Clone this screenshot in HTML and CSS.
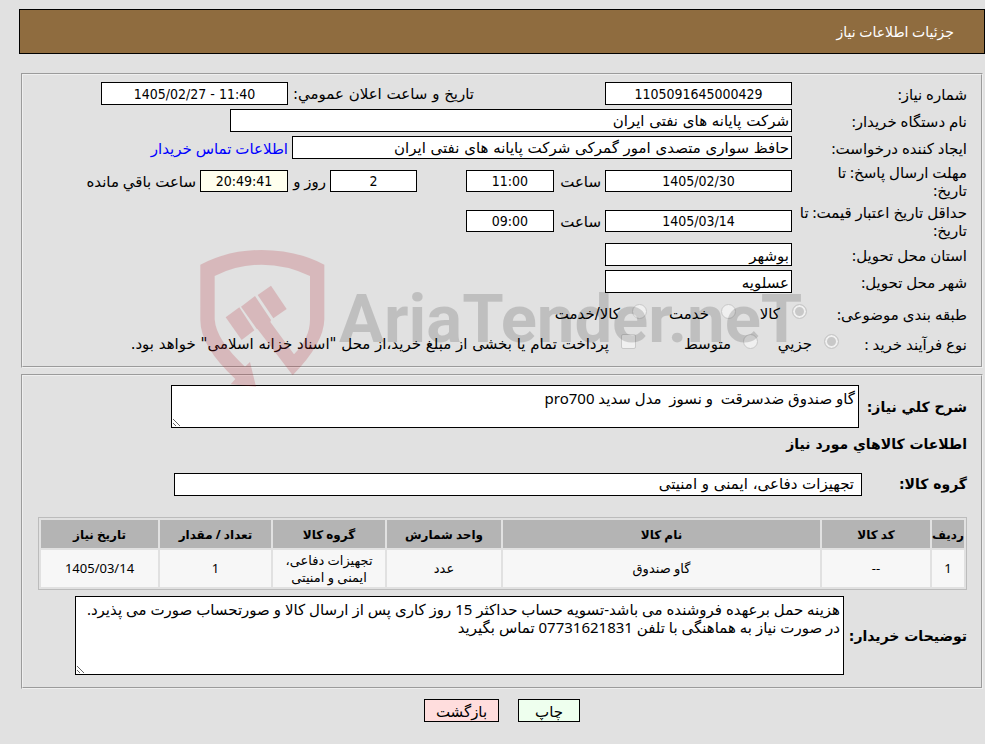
FILE: index.html
```html
<!DOCTYPE html>
<html lang="fa" dir="rtl">
<head>
    <meta charset="utf-8">
    <title>جزئیات اطلاعات نیاز</title>
    <link rel="stylesheet" href="styles.css">
</head>
<body>
    <h1 class="page-title">جزئیات اطلاعات نیاز</h1>

    <form class="need-form">
        <!-- General information -->
        <fieldset class="panel">
            <div class="row">
                <label class="caption" for="needNo">شماره نیاز:</label>
                <input type="text" class="box date" id="needNo" value="1105091645000429" readonly>
                <label class="announce" for="announceDate">تاریخ و ساعت اعلان عمومي:</label>
                <input type="text" class="box date" id="announceDate" dir="ltr" value="1405/02/27 - 11:40" readonly>
            </div>
            <div class="row">
                <label class="caption" for="buyer">نام دستگاه خریدار:</label>
                <input type="text" class="box buyer" id="buyer" value="شرکت پایانه های نفتی ایران" readonly>
            </div>
            <div class="row">
                <label class="caption" for="creator">ایجاد کننده درخواست:</label>
                <input type="text" class="box creator" id="creator" value="حافظ سواری متصدی امور گمرکی شرکت پایانه های نفتی ایران" readonly>
                <a class="contact" href="#contact">اطلاعات تماس خریدار</a>
            </div>
            <div class="row tall">
                <label class="caption" for="replyDate">مهلت ارسال پاسخ: تا<br>تاریخ:</label>
                <input type="text" class="box date" id="replyDate" value="1405/02/30" readonly>
                <label class="unit" for="replyTime">ساعت</label>
                <input type="text" class="box time" id="replyTime" value="11:00" readonly>
                <input type="text" class="box time days" id="daysLeft" value="2" readonly>
                <label class="unit day-unit" for="daysLeft">روز و</label>
                <input type="text" class="box time countdown" id="timeLeft" value="20:49:41" readonly>
                <label class="left" for="timeLeft">ساعت باقي مانده</label>
            </div>
            <div class="row tall">
                <label class="caption" for="priceDate">حداقل تاریخ اعتبار قیمت: تا<br>تاریخ:</label>
                <input type="text" class="box date" id="priceDate" value="1405/03/14" readonly>
                <label class="unit" for="priceTime">ساعت</label>
                <input type="text" class="box time" id="priceTime" value="09:00" readonly>
            </div>
            <div class="row">
                <label class="caption" for="province">استان محل تحویل:</label>
                <input type="text" class="box place" id="province" value="بوشهر" readonly>
            </div>
            <div class="row">
                <label class="caption" for="city">شهر محل تحویل:</label>
                <input type="text" class="box place" id="city" value="عسلویه" readonly>
            </div>
            <div class="row options subject">
                <span class="caption">طبقه بندی موضوعی:</span>
                <label class="option goods"><input type="radio" name="subject" checked disabled>کالا</label>
                <label class="option service"><input type="radio" name="subject" disabled>خدمت</label>
                <label class="option"><input type="radio" name="subject" disabled>کالا/خدمت</label>
            </div>
            <div class="row options process">
                <span class="caption">نوع فرآیند خرید :</span>
                <label class="option small"><input type="radio" name="process" checked disabled>جزیي</label>
                <label class="option medium"><input type="radio" name="process" disabled>متوسط</label>
                <label class="option"><input type="checkbox" name="treasury" disabled>پرداخت تمام یا بخشی از مبلغ خرید،از محل "اسناد خزانه اسلامی" خواهد بود.</label>
            </div>
        </fieldset>

        <!-- Goods -->
        <fieldset class="panel goods-panel">
            <div class="row">
                <label class="caption strong" for="summary">شرح کلي نیاز:</label>
                <textarea class="box summary" id="summary" readonly>گاو صندوق ضدسرقت  و نسوز  مدل سدید pro700</textarea>
            </div>
            <h2 class="sub-title">اطلاعات کالاهاي مورد نیاز</h2>
            <div class="row group-row">
                <label class="caption strong" for="group">گروه کالا:</label>
                <input type="text" class="box group" id="group" value="تجهیزات دفاعی، ایمنی و امنیتی" readonly>
            </div>
            <table class="items">
                <thead>
                    <tr>
                        <th class="col-row">ردیف</th>
                        <th class="col-code">کد کالا</th>
                        <th>نام کالا</th>
                        <th class="col-unit">واحد شمارش</th>
                        <th class="col-group">گروه کالا</th>
                        <th class="col-count">تعداد / مقدار</th>
                        <th class="col-date">تاریخ نیاز</th>
                    </tr>
                </thead>
                <tbody>
                    <tr>
                        <td>1</td>
                        <td>--</td>
                        <td>گاو صندوق</td>
                        <td>عدد</td>
                        <td>تجهیزات دفاعی، ایمنی و امنیتی</td>
                        <td>1</td>
                        <td>1405/03/14</td>
                    </tr>
                </tbody>
            </table>
            <div class="row">
                <label class="caption strong notes-caption" for="notes">توضیحات خریدار:</label>
                <textarea class="box notes" id="notes" readonly>هزینه حمل برعهده فروشنده می باشد-تسویه حساب حداکثر 15 روز کاری پس از ارسال کالا و صورتحساب صورت می پذیرد.
در صورت نیاز به هماهنگی با تلفن 07731621831 تماس بگیرید</textarea>
            </div>
        </fieldset>

        <div class="buttons">
            <button type="button" class="btn print">چاپ</button>
            <button type="button" class="btn back">بازگشت</button>
        </div>

        <!-- Watermark -->
        <div class="watermark" dir="ltr">
            <svg class="shield" viewBox="600 57 375 417" aria-hidden="true">
                <path d="M601 104Q685 60 785 60Q890 60 973 104V268Q972 340 878 436L773 298L770 296L723 230L765 198L813 270L811 276L882 373Q930 325 930 268V138Q860 104 785 104Q710 104 644 138V268Q648 330 735 410L750 396L768 470L692 463L706 447Q600 350 601 268Z"/>
                <path d="M677 262L718 232L763 301L725 330Z"/>
                <path d="M773 195L813 167L860 237L820 265Z"/>
            </svg>
            <span class="brand">AriaTender.neT</span>
        </div>
    </form>
</body>
</html>
```

FILE: styles.css
```css
* {
    box-sizing: border-box;
}

body {
    margin: 0;
    padding: 9px 0 0 19px;
    background: #e1e1e1;
    color: #000;
    font-family: Tahoma, "Noto Sans", "DejaVu Sans", sans-serif;
    font-size: 15px;
    line-height: 18px;
}

input,
textarea,
button {
    font: inherit;
    color: inherit;
}

.page-title {
    margin: 0 0 19px;
    padding: 13px 30px 12px;
    border: 1px solid #000;
    background: #8f6c3f;
    color: #fff;
    font-size: 14px;
    font-weight: normal;
}

.need-form {
    position: relative;
}

.panel {
    min-width: 0;
    margin: 0 2px 6px;
    padding: 5px 14px 7px;
    border: 2px groove #efefef;
}

.row {
    display: flex;
    align-items: center;
    gap: 4px;
    min-height: 27px;
}

.row.tall {
    min-height: 40px;
}

.caption {
    flex: none;
    width: 171px;
    white-space: nowrap;
}

.strong {
    width: 104px;
    font-family: Tahoma, "DejaVu Sans", sans-serif;
    font-size: 14px;
    font-weight: bold;
}

.box {
    height: 23px;
    padding: 1px 2px;
    border: 1px solid #000;
    border-radius: 0;
    background: #fff;
    outline: none;
}

.date,
.time {
    font-family: Tahoma, "DejaVu Sans Condensed", sans-serif;
    font-size: 14px;
    text-align: center;
}

.date {
    width: 187px;
}

.place {
    width: 187px;
}

.announce,
.buyer,
.creator,
.option,
.group {
    font-family: Tahoma, "DejaVu Sans", sans-serif;
}

.announce {
    width: 182px;
    margin-right: 127px;
    white-space: nowrap;
}

.buyer {
    width: 562px;
}

.creator {
    width: 500px;
}

.contact {
    color: #00f;
    text-decoration: none;
    white-space: nowrap;
}

.time {
    width: 88px;
}

.tall .box {
    height: 22px;
}

.days {
    width: 87px;
    margin-right: 45px;
}

.unit {
    width: 43px;
    white-space: nowrap;
}

.day-unit {
    width: 34px;
}

.countdown {
    background: #ffffee;
}

.left {
    white-space: nowrap;
}

/* Radio rows */
.options {
    gap: 0;
    min-height: 30px;
}

.subject {
    margin-top: 4px;
}

.option {
    display: flex;
    align-items: center;
    gap: 12px;
    white-space: nowrap;
}

.option input {
    flex: none;
    appearance: none;
    width: 15px;
    height: 15px;
    margin: 0 0 5px;
    border: 1px solid #c8c8c8;
    border-radius: 50%;
    background: #f0f0f0;
}

.option input:checked {
    background: #c8c8c8;
    box-shadow: inset 0 0 0 2px #f0f0f0;
}

.option input[type="checkbox"] {
    border-radius: 2px;
}

.subject .caption {
    width: 160px;
}

.process .caption {
    width: 128px;
}

.goods {
    width: 71px;
}

.service {
    width: 89px;
}

.small {
    width: 81px;
}

.medium {
    width: 122px;
}

/* Goods panel */
.goods-panel {
    padding: 9px 14px 12px;
    margin-bottom: 10px;
}

.summary,
.notes {
    display: block;
    padding: 3px;
    resize: both;
    overflow: hidden;
}

.summary {
    width: 688px;
    height: 43px;
}

.notes {
    width: 769px;
    height: 79px;
}

.notes-caption {
    width: 119px;
}

.sub-title {
    margin: 7px 0 14px;
    font-family: Tahoma, "DejaVu Sans", sans-serif;
    font-size: 14px;
}

.group-row {
    min-height: 54px;
    margin-top: -10px;
}

.group-row .caption {
    width: 101px;
}

.group {
    width: 688px;
    padding: 1px 7px;
}

.items {
    width: calc(100% - 1px);
    margin: 6px 0 6px;
    border: 1px solid #bcbcbc;
    border-spacing: 2px;
    table-layout: fixed;
    font-size: 13px;
    line-height: 17px;
    text-align: center;
}

.items th {
    height: 28px;
    padding: 0;
    background: #b4b4b4;
    font-size: 12px;
}

.items td {
    height: 37px;
    padding: 1px 6px;
    background: #f7f7f7;
}

.col-row {
    width: 32px;
}

.col-code {
    width: 108px;
}

.col-unit {
    width: 114px;
}

.col-group {
    width: 112px;
}

.col-count {
    width: 111px;
}

.col-date {
    width: 117px;
}

.buttons {
    display: flex;
    justify-content: center;
    gap: 19px;
}

.btn {
    height: 23px;
    padding: 0 10px;
    border: 1px solid #000;
    cursor: pointer;
}

.print {
    width: 62px;
    background: #eeffee;
}

.back {
    width: 75px;
    background: #ffdddd;
}

/* Watermark lies over both panels */
.watermark {
    position: absolute;
    top: 176px;
    left: 181px;
    display: flex;
    align-items: center;
    gap: 14px;
    pointer-events: none;
}

.shield {
    width: 125px;
    height: 139px;
    fill: #b01c28;
    opacity: 0.2;
}

.brand {
    color: rgba(0, 0, 0, 0.15);
    font-family: Roboto, "Liberation Sans", sans-serif;
    font-size: 67px;
    font-weight: bold;
    line-height: 80px;
}
```
